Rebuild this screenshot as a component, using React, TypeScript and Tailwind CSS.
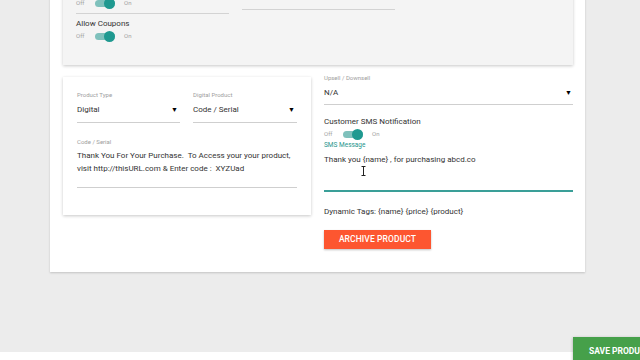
import React from "react";

function Toggle() {
  return (
    <div className="flex items-center h-[12px] text-[6px] text-[#a3a3a3] leading-none">
      <span className="w-[19px]">Off</span>
      <div className="relative w-[20px] h-[7px] rounded-full bg-[#7fc1bc]">
        <div className="absolute right-0 top-[-2px] w-[11px] h-[11px] rounded-full bg-[#1f9990]" />
      </div>
      <span className="ml-[9px]">On</span>
    </div>
  );
}

function Select({ label, value, w }: { label: string; value: string; w: string }) {
  return (
    <div className={w}>
      <div className="h-[8px] leading-[8px] text-[6px] text-[#9e9e9e]">{label}</div>
      <div className="mt-[5px] h-[12px] flex items-center justify-between text-[8px] text-[#333]">
        <span>{value}</span>
        <span className="text-[7px] text-black mr-[2px]">▼</span>
      </div>
      <div className="mt-[6px] border-b border-[#cfcfcf]" />
    </div>
  );
}

export default function App() {
  return (
    <div className="relative w-[640px] h-[360px] overflow-hidden bg-[#ececec] font-['Roboto',sans-serif] flex flex-col">
      <div className="h-[352px] shrink-0 flex flex-col">
        <div className="ml-[50px] w-[535px] h-[292px] -mt-[20px] shrink-0 bg-white shadow-[0_1px_2px_rgba(0,0,0,0.18)] pl-[13px] pr-[12px]">
          {/* top card */}
          <div className="h-[85px] bg-[#f4f4f4] shadow-[0_1px_3px_rgba(0,0,0,0.22)] px-[13px] flex flex-col">
            <div className="flex gap-[13px]">
              <div className="w-[153px] pt-[17px]">
                <Toggle />
                <div className="mt-[4px] border-b-[1.5px] border-[#d3d3d3]" />
              </div>
              <div className="w-[153px] pt-[12px]">
                <div className="h-[10px] leading-[10px] text-[8px] text-[#333]">Display Priority</div>
                <div className="mt-[7px] border-b-[1.5px] border-[#d3d3d3]" />
              </div>
            </div>
            <div className="mt-[5px] h-[10px] leading-[10px] text-[8px] text-[#333]">Allow Coupons</div>
            <div className="mt-[1px]">
              <Toggle />
            </div>
          </div>

          {/* second section */}
          <div className="mt-[12px] flex gap-[13px]">
            <div className="w-[248px] h-[138px] bg-white shadow-[0_1px_3px_rgba(0,0,0,0.22)] px-[14px] pt-[14px]">
              <div className="flex gap-[13px]">
                <Select label="Product Type" value="Digital" w="w-[104px]" />
                <Select label="Digital Product" value="Code / Serial" w="w-[105px]" />
              </div>
              <div className="mt-[15px] h-[8px] leading-[8px] text-[6px] text-[#9e9e9e]">Code / Serial</div>
              <div className="mt-[3px] pb-[12px] border-b border-[#cfcfcf] text-[8px] leading-[13px] text-[#333] whitespace-pre-wrap">
                {"Thank You For Your Purchase.  To Access your your product,\nvisit http://thisURL.com & Enter code :  XYZUad"}
              </div>
            </div>

            <div className="w-[249px] relative">
              <div className="-mt-[3px] h-[8px] leading-[8px] text-[6px] text-[#9e9e9e]">Upsell / Downsell</div>
              <div className="mt-[5px] h-[12px] flex items-center justify-between text-[8px] text-[#333]">
                <span>N/A</span>
                <span className="text-[7px] text-black mr-[1px]">▼</span>
              </div>
              <div className="mt-[5px] border-b border-[#cfcfcf]" />
              <div className="mt-[12px] h-[10px] leading-[10px] text-[8px] text-[#333]">Customer SMS Notification</div>
              <div className="mt-[1px]">
                <Toggle />
              </div>
              <div className="mt-[1px] h-[8px] leading-[8px] text-[6.5px] text-[#26958c]">SMS Message</div>
              <div className="mt-[5px] h-[12px] leading-[12px] text-[8px] text-[#333]">
                Thank you {"{name}"} , for purchasing abcd.co
              </div>
              <div className="mt-[24px] border-b-2 border-[#3a9f98]" />
              <div className="mt-[15px] h-[10px] leading-[10px] text-[8px] text-[#333]">
                Dynamic Tags: {"{name}"} {"{price}"} {"{product}"}
              </div>
              <button className="mt-[13px] w-[107px] h-[19px] bg-[#fd5630] text-white text-[8.5px] font-medium tracking-[0.1px] shadow-[0_1px_2px_rgba(0,0,0,0.25)] flex items-center justify-center">
                ARCHIVE PRODUCT
              </button>
              <svg className="absolute left-[37px] top-[89px]" width="5" height="10" viewBox="0 0 5 10">
                <path d="M0.5 0.5 H4.5 M2.5 0.5 V9.5 M0.5 9.5 H4.5" stroke="#222" strokeWidth="1" fill="none" />
              </svg>
            </div>
          </div>
        </div>
      </div>
      <div className="h-[8px] shrink-0 bg-white" />
      <div className="absolute left-[573px] top-[337px] w-[80px] h-[26px] bg-[#46a04a] shadow-[0_1px_3px_rgba(0,0,0,0.3)] flex items-center pl-[16px] pt-[2px] text-white text-[8.5px] font-bold whitespace-nowrap">
        SAVE PRODUCT
      </div>
    </div>
  );
}
